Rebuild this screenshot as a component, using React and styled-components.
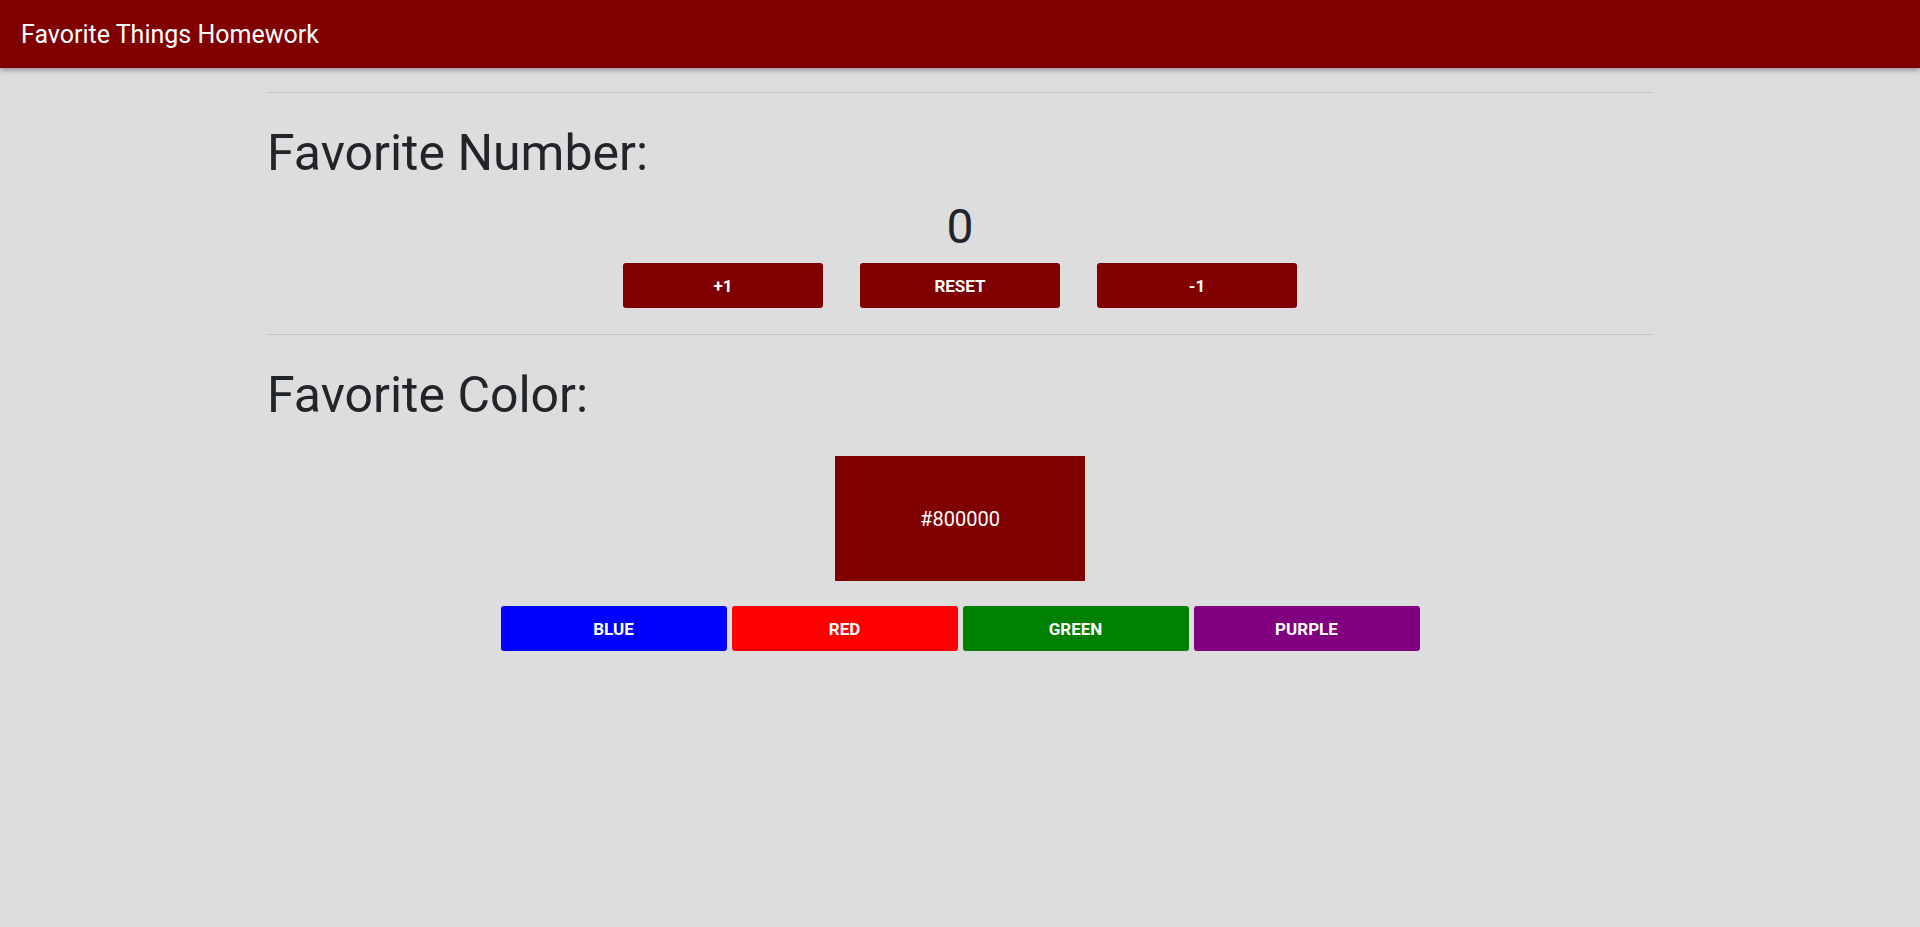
import React, { useState } from "react";
import styled, { createGlobalStyle } from "styled-components";

const GlobalStyle = createGlobalStyle`
  html, body {
    margin: 0;
    padding: 0;
    background: #dddddd;
    font-family: Roboto, "Liberation Sans", sans-serif;
    color: #212529;
  }
  * {
    box-sizing: border-box;
  }
`;

const colors = [
  { name: "Blue", value: "#0000ff" },
  { name: "Red", value: "#ff0000" },
  { name: "Green", value: "#008000" },
  { name: "Purple", value: "#800080" },
];

const App = () => {
  const [count, setCount] = useState(0);
  const [color, setColor] = useState("#800000");

  return (
    <Page>
      <GlobalStyle />
      <Header>Favorite Things Homework</Header>
      <Container>
        <Divider />
        <SectionTitle>Favorite Number:</SectionTitle>
        <Counter>{count}</Counter>
        <CounterRow>
          <ActionButton onClick={() => setCount(count + 1)}>+1</ActionButton>
          <ActionButton onClick={() => setCount(0)}>Reset</ActionButton>
          <ActionButton onClick={() => setCount(count - 1)}>-1</ActionButton>
        </CounterRow>
        <Divider />
        <SectionTitle>Favorite Color:</SectionTitle>
        <Swatch $color={color}>{color}</Swatch>
        <ColorRow>
          {colors.map((c) => (
            <ColorButton
              key={c.name}
              $color={c.value}
              onClick={() => setColor(c.value)}
            >
              {c.name}
            </ColorButton>
          ))}
        </ColorRow>
      </Container>
    </Page>
  );
};

const Page = styled.div`
  min-height: 927px;
  background: #dddddd;
`;

const Header = styled.header`
  display: flex;
  align-items: center;
  height: 68px;
  padding-left: 21px;
  background: #800000;
  color: #ffffff;
  font-size: 25px;
  box-shadow: 0 2px 5px rgba(0, 0, 0, 0.35);
`;

const Container = styled.main`
  width: 1388px;
  margin: 0 auto;
  padding-top: 24px;
`;

const Divider = styled.hr`
  margin: 0;
  border: 0;
  border-top: 1px solid rgba(0, 0, 0, 0.1);
`;

const SectionTitle = styled.h2`
  margin: 28px 0 0;
  padding-left: 1px;
  font-size: 50px;
  font-weight: 400;
  line-height: 64px;
`;

const Counter = styled.div`
  margin-top: 13px;
  text-align: center;
  font-size: 48px;
  font-weight: 400;
  line-height: 58px;
`;

const CounterRow = styled.div`
  display: flex;
  justify-content: center;
  gap: 37px;
  margin: 7px 0 26px;
`;

const ActionButton = styled.button`
  width: 200px;
  height: 45px;
  border: 0;
  border-radius: 3px;
  background: #800000;
  color: #ffffff;
  font-family: Roboto, "Liberation Sans", sans-serif;
  font-size: 17px;
  font-weight: 700;
  text-transform: uppercase;
  cursor: pointer;
`;

const Swatch = styled.div`
  display: flex;
  align-items: center;
  justify-content: center;
  width: 250px;
  height: 125px;
  margin: 29px auto 0;
  background: ${(p) => p.$color};
  color: #ffffff;
  font-size: 20px;
`;

const ColorRow = styled.div`
  display: flex;
  justify-content: center;
  gap: 5px;
  margin-top: 25px;
`;

const ColorButton = styled(ActionButton)`
  width: 226px;
  background: ${(p) => p.$color};
`;

export default App;
